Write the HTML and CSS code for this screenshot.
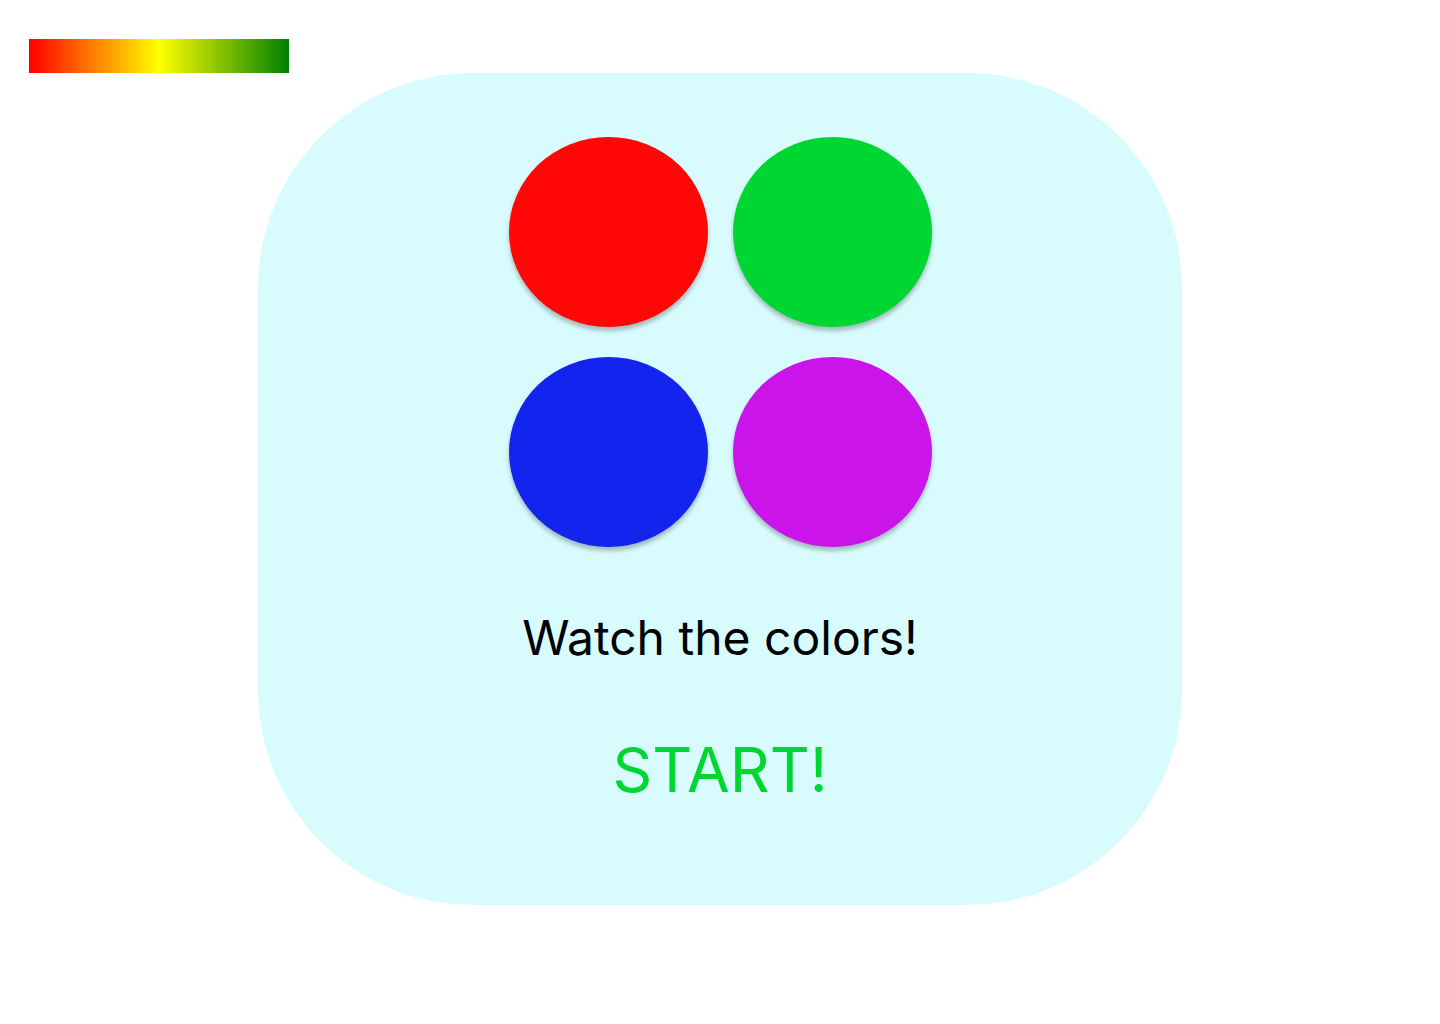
FILE: index.html
```html
<!DOCTYPE html>
<html>
<head>
<meta charset="utf-8">
<link rel="stylesheet" href="styles.css">
</head>
<body>
<div class="meter"></div>
<main class="card">
  <div class="grid">
    <div class="dot dot-red"></div>
    <div class="dot dot-green"></div>
    <div class="dot dot-blue"></div>
    <div class="dot dot-purple"></div>
  </div>
  <p class="msg">Watch the colors!</p>
  <button class="start">START!</button>
</main>
</body>
</html>
```

FILE: styles.css
```css
html, body {
  margin: 0;
  padding: 0;
  background: #ffffff;
  font-family: Inter, "Noto Sans", sans-serif;
}
body {
  padding-top: 39px;
}
.meter {
  width: 260px;
  height: 34px;
  margin-left: 29px;
  background: linear-gradient(to right, #ff0000 0%, #ffff00 50%, #008000 100%);
}
.card {
  width: 924px;
  height: 832px;
  margin-left: 258px;
  box-sizing: border-box;
  background: #d8fbfd;
  border-radius: 215px;
  padding-top: 64px;
  display: flex;
  flex-direction: column;
  align-items: center;
}
.grid {
  display: grid;
  grid-template-columns: 199px 199px;
  grid-auto-rows: 190px;
  column-gap: 25px;
  row-gap: 30px;
}
.dot {
  border-radius: 50%;
  box-shadow: 0 4px 4px rgba(0, 0, 0, 0.25);
}
.dot-red { background: #ff0707; }
.dot-green { background: #00d632; }
.dot-blue { background: #1224ee; }
.dot-purple { background: #cb14ea; }
.msg {
  margin: 62px 0 0;
  font-size: 48px;
  line-height: 58px;
  color: #000000;
}
.start {
  margin-top: 64px;
  padding: 0;
  border: none;
  background: none;
  font-family: inherit;
  font-size: 62px;
  line-height: 78px;
  color: #00d632;
  cursor: pointer;
}
```
